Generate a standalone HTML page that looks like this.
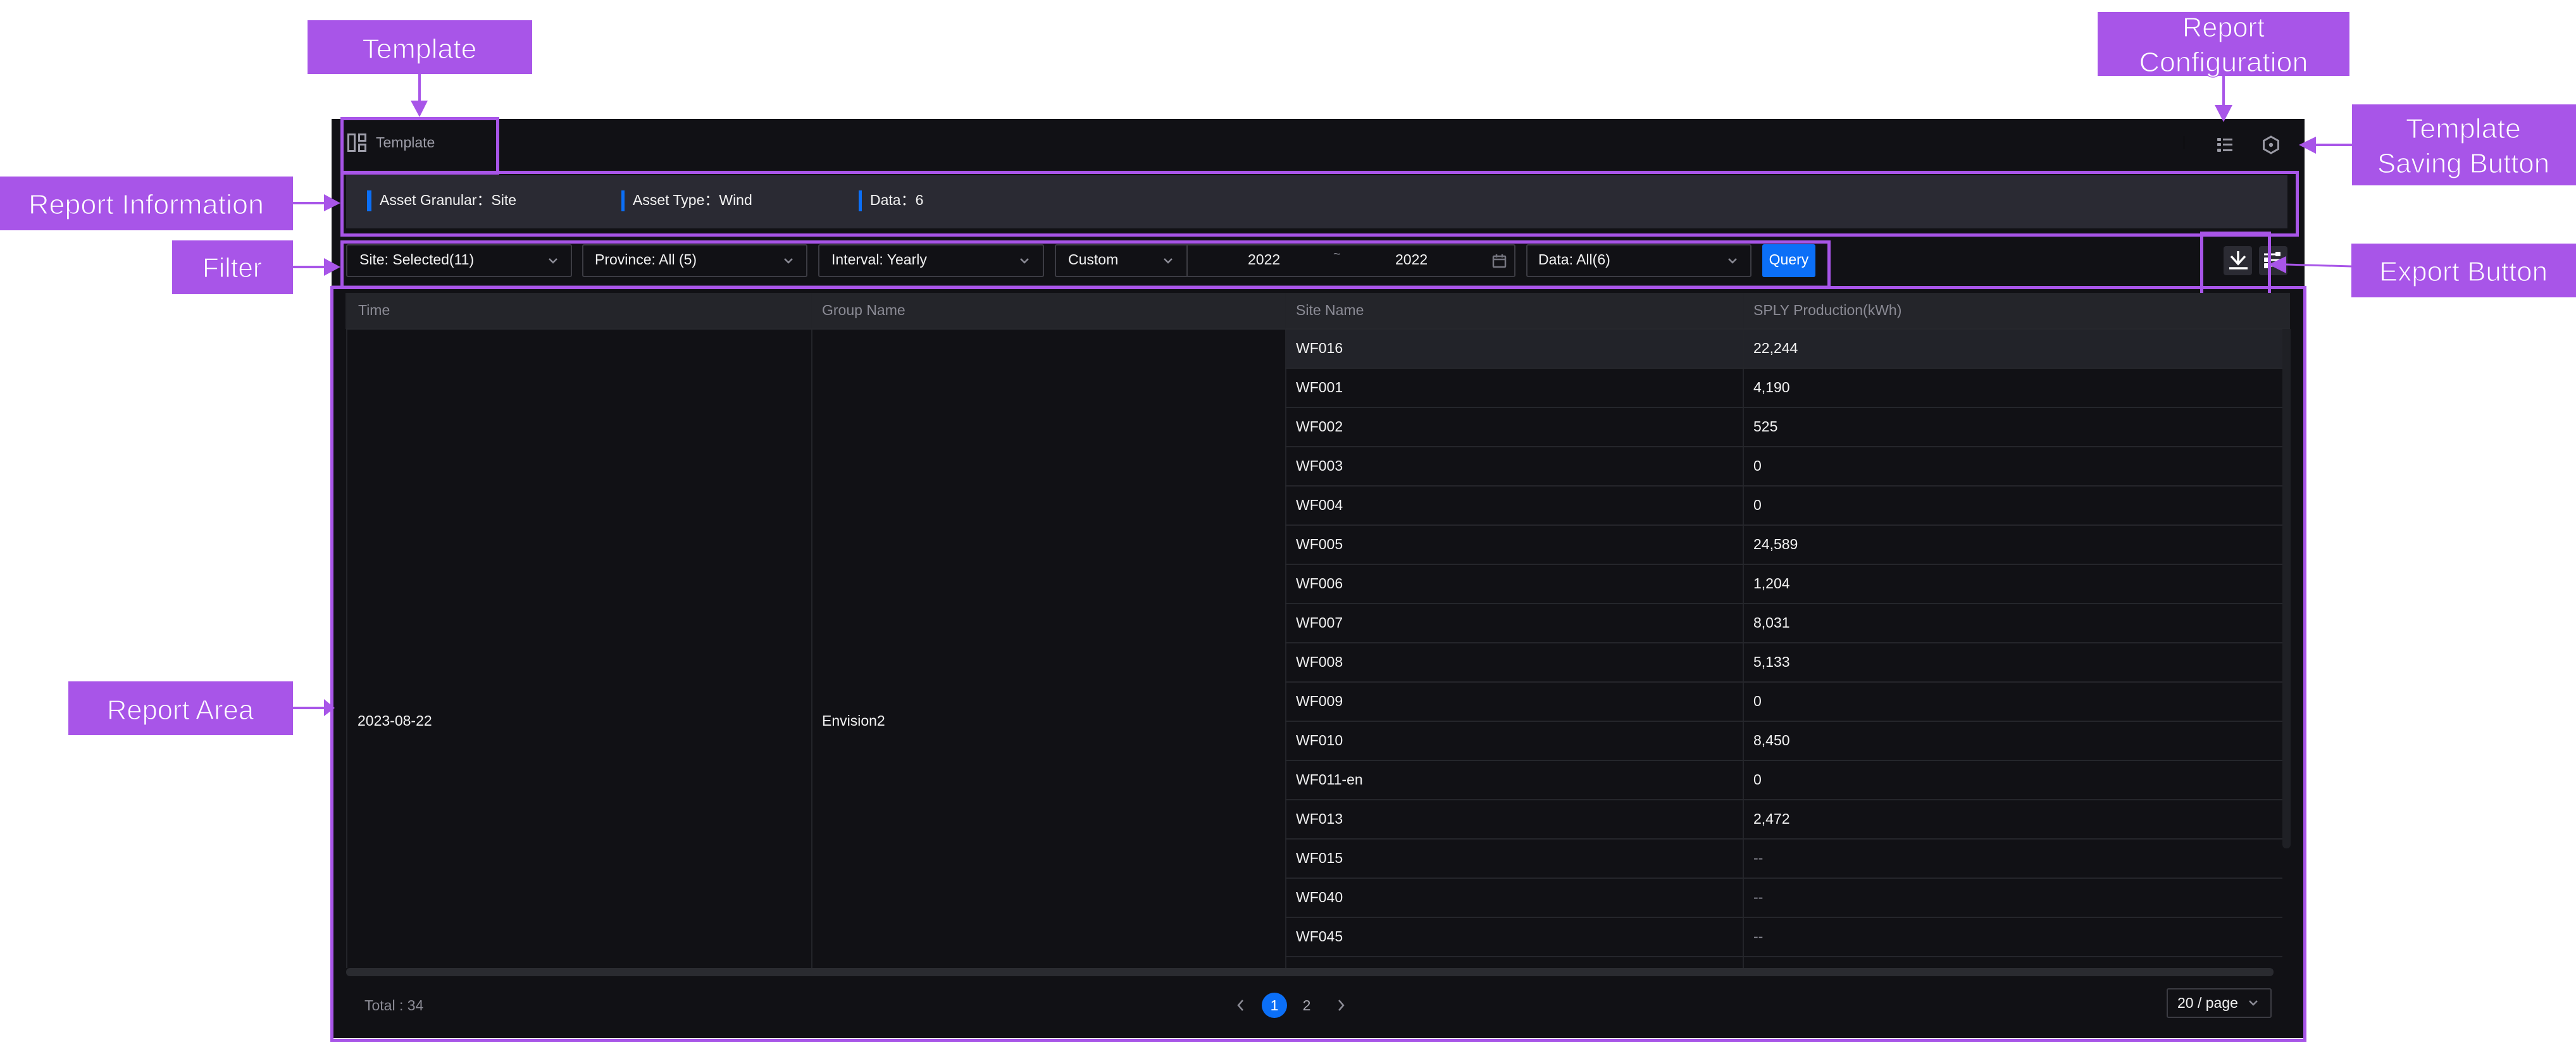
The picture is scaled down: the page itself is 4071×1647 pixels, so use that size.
<!DOCTYPE html>
<html lang="en"><head><meta charset="utf-8"><title>Template report</title>
<style>
html,body{margin:0;padding:0;background:#fff}
#p{position:relative;width:4071px;height:1647px;overflow:hidden;background:#fff;font-family:"Liberation Sans","Noto Sans CJK SC",sans-serif;font-size:23px;color:#f2f2f2}
#p div{position:absolute;box-sizing:border-box}
.t{white-space:nowrap;height:30px;line-height:30px}
.h{color:#8b8b95}
.s{border:2px solid #3c3c43;border-radius:3px;top:386px;height:52px;background:#111115}
.d{color:#8b8b95}
.v{width:2px;background:#232429}
.l{height:2px;left:2031px;width:1576px;background:#25262b}
svg{position:absolute;left:0;top:0}
</style></head><body><div id="p">
<div style="left:524px;top:188px;width:3118px;height:1453px;background:#111115"></div>

<div class="t" style="left:594px;top:210px;color:#9d9da8">Template</div>
<div style="left:3451px;top:215px;width:1px;height:21px;background:#050507"></div>

<div style="left:547px;top:277px;width:3068px;height:84px;background:#2a2a33"></div>
<div style="left:580px;top:301px;width:7px;height:33px;background:#0b6ff7"></div>
<div class="t" style="left:600px;top:301px">Asset Granular：Site</div>
<div style="left:982px;top:301px;width:5px;height:33px;background:#0b6ff7"></div>
<div class="t" style="left:1000px;top:301px">Asset Type：Wind</div>
<div style="left:1357px;top:301px;width:5px;height:33px;background:#0b6ff7"></div>
<div class="t" style="left:1375px;top:301px">Data：6</div>

<div class="s" style="left:547px;width:357px"></div><div class="t" style="left:568px;top:395px">Site: Selected(11)</div>
<div class="s" style="left:920px;width:356px"></div><div class="t" style="left:940px;top:395px">Province: All (5)</div>
<div class="s" style="left:1293px;width:357px"></div><div class="t" style="left:1314px;top:395px">Interval: Yearly</div>
<div class="s" style="left:1667px;width:728px"></div><div style="left:1875px;top:386px;width:2px;height:52px;background:#3c3c43"></div>
<div class="t" style="left:1688px;top:395px">Custom</div>
<div class="t" style="left:1972px;top:395px">2022</div>
<div class="t" style="left:2107px;top:387px;color:#8b8b95;font-size:20px">~</div>
<div class="t" style="left:2205px;top:395px">2022</div>
<div class="s" style="left:2412px;width:356px"></div><div class="t" style="left:2431px;top:395px">Data: All(6)</div>
<div style="left:2785px;top:386px;width:84px;height:52px;background:#0b6ff7;border-radius:3px"></div>
<div class="t" style="left:2785px;top:395px;width:84px;text-align:center;color:#fff">Query</div>

<div style="left:3514px;top:389px;width:45px;height:46px;background:#2b2b33;border-radius:4px"></div>
<div style="left:3570px;top:389px;width:45px;height:46px;background:#2b2b33;border-radius:4px"></div>

<div style="left:546px;top:463px;width:3073px;height:57px;background:#24252a"></div>
<div style="left:2031px;top:520px;width:1576px;height:62px;background:#222329"></div>
<div class="v" style="left:547px;top:463px;height:1067px"></div>
<div class="v" style="left:1282px;top:463px;height:1067px"></div>
<div class="v" style="left:2031px;top:463px;height:1067px"></div>
<div class="v" style="left:2754px;top:463px;height:1067px"></div>
<div style="left:547px;top:519px;width:3072px;height:2px;background:#26272c"></div>

<div class="l" style="top:581px"></div><div class="l" style="top:643px"></div><div class="l" style="top:705px"></div><div class="l" style="top:767px"></div><div class="l" style="top:829px"></div><div class="l" style="top:891px"></div><div class="l" style="top:953px"></div><div class="l" style="top:1015px"></div><div class="l" style="top:1077px"></div><div class="l" style="top:1139px"></div><div class="l" style="top:1201px"></div><div class="l" style="top:1263px"></div><div class="l" style="top:1325px"></div><div class="l" style="top:1387px"></div><div class="l" style="top:1449px"></div><div class="l" style="top:1511px"></div>

<div class="t h" style="left:566px;top:475px">Time</div>
<div class="t h" style="left:1299px;top:475px">Group Name</div>
<div class="t h" style="left:2048px;top:475px">Site Name</div>
<div class="t h" style="left:2771px;top:475px">SPLY Production(kWh)</div>

<div class="t" style="left:565px;top:1124px">2023-08-22</div>
<div class="t" style="left:1299px;top:1124px">Envision2</div>

<div class="t" style="left:2048px;top:535px">WF016</div><div class="t" style="left:2771px;top:535px">22,244</div>
<div class="t" style="left:2048px;top:597px">WF001</div><div class="t" style="left:2771px;top:597px">4,190</div>
<div class="t" style="left:2048px;top:659px">WF002</div><div class="t" style="left:2771px;top:659px">525</div>
<div class="t" style="left:2048px;top:721px">WF003</div><div class="t" style="left:2771px;top:721px">0</div>
<div class="t" style="left:2048px;top:783px">WF004</div><div class="t" style="left:2771px;top:783px">0</div>
<div class="t" style="left:2048px;top:845px">WF005</div><div class="t" style="left:2771px;top:845px">24,589</div>
<div class="t" style="left:2048px;top:907px">WF006</div><div class="t" style="left:2771px;top:907px">1,204</div>
<div class="t" style="left:2048px;top:969px">WF007</div><div class="t" style="left:2771px;top:969px">8,031</div>
<div class="t" style="left:2048px;top:1031px">WF008</div><div class="t" style="left:2771px;top:1031px">5,133</div>
<div class="t" style="left:2048px;top:1093px">WF009</div><div class="t" style="left:2771px;top:1093px">0</div>
<div class="t" style="left:2048px;top:1155px">WF010</div><div class="t" style="left:2771px;top:1155px">8,450</div>
<div class="t" style="left:2048px;top:1217px">WF011-en</div><div class="t" style="left:2771px;top:1217px">0</div>
<div class="t" style="left:2048px;top:1279px">WF013</div><div class="t" style="left:2771px;top:1279px">2,472</div>
<div class="t" style="left:2048px;top:1341px">WF015</div><div class="t d" style="left:2771px;top:1341px">--</div>
<div class="t" style="left:2048px;top:1403px">WF040</div><div class="t d" style="left:2771px;top:1403px">--</div>
<div class="t" style="left:2048px;top:1465px">WF045</div><div class="t d" style="left:2771px;top:1465px">--</div>

<div style="left:3607px;top:520px;width:13px;height:821px;background:#1f2025;border-radius:0 0 6px 6px"></div>
<div style="left:547px;top:1530px;width:3046px;height:13px;background:#2a2b30;border-radius:6px"></div>

<div class="t" style="left:576px;top:1574px;color:#8b8b95">Total : 34</div>
<div style="left:1994px;top:1569px;width:40px;height:40px;border-radius:50%;background:#0b6ff7"></div>
<div class="t" style="left:1994px;top:1574px;width:40px;text-align:center;color:#fff">1</div>
<div class="t" style="left:2045px;top:1574px;width:40px;text-align:center;color:#a9a9b2">2</div>
<div style="left:3424px;top:1562px;width:166px;height:47px;border:2px solid #3c3c43;border-radius:3px"></div>
<div class="t" style="left:3441px;top:1570px">20 / page</div>

<svg width="4071" height="1647" viewBox="0 0 4071 1647" fill="none">
 <!-- chevrons -->
 <g stroke="#8b8b95" stroke-width="2.5">
  <path d="M868 409l6 6 6-6M1240 409l6 6 6-6M1613 409l6 6 6-6M1840 409l6 6 6-6M2732 409l6 6 6-6M3555 1582l6 6 6-6"/>
  <path d="M1964 1581l-7 8 7 8M2116 1581l7 8-7 8"/>
 </g>
 <!-- calendar -->
 <g stroke="#75757f" stroke-width="2.5">
  <rect x="2360" y="405" width="19" height="17" rx="1"/><path d="M2360 410h19M2365 402v5M2374 402v5"/>
 </g>
 <!-- template icon -->
 <g stroke="#a0a0ac" stroke-width="3">
  <rect x="550.500" y="212.500" width="10" height="26"/>
  <rect x="567.500" y="212.500" width="10" height="10"/>
  <rect x="567.500" y="228.500" width="10" height="10"/>
 </g>
 <!-- list icon -->
 <g fill="#9a9aa4">
  <rect x="3504" y="218" width="6" height="5" rx="1"/><rect x="3504" y="226" width="6" height="5" rx="1"/><rect x="3504" y="235" width="6" height="5" rx="1"/>
  <rect x="3513" y="219" width="15" height="3"/><rect x="3513" y="227" width="15" height="3"/><rect x="3513" y="236" width="15" height="3"/>
 </g>
 <!-- hex icon -->
 <path d="M3589 216l11.500 6.500v13l-11.500 6.500-11.500-6.500v-13z" stroke="#9a9aa4" stroke-width="3"/>
 <circle cx="3589" cy="229" r="3.200" fill="#9a9aa4"/>
 <!-- download -->
 <path d="M3537 397v21M3526 405l11 12 11-12" stroke="#fff" stroke-width="3.500"/>
 <path d="M3523 424h29" stroke="#fff" stroke-width="3.500"/>
 <!-- sliders -->
 <g stroke="#fff" stroke-width="3"><path d="M3578 402h26M3578 411h26M3578 420h26"/></g>
 <g fill="#fff"><rect x="3596" y="398" width="8" height="7" rx="1"/><rect x="3578" y="407" width="8" height="7" rx="1"/><rect x="3578" y="416" width="8" height="8" rx="1"/></g>

 <!-- annotation boxes -->
 <g stroke="#a855e8" stroke-width="5">
  <rect x="540.500" y="187.500" width="246" height="86"/>
  <rect x="540.500" y="272.500" width="3090" height="99"/>
  <path d="M540.500 457V382.500H2890.500V453"/>
  <path d="M2890.500 380V454H525"/>
  <path d="M524.500 1647V454.500H3642.500V1647"/>
  <path d="M522 1644.500H3645"/>
  <path d="M3479.500 463V368.500H3586.500V463"/>
 </g>
 <!-- labels -->
 <g fill="#a855e8">
  <rect x="486" y="32" width="355" height="85"/>
  <rect x="0" y="279" width="463" height="85"/>
  <rect x="272" y="380" width="191" height="85"/>
  <rect x="108" y="1077" width="355" height="85"/>
  <rect x="3315" y="19" width="398" height="101"/>
  <rect x="3717" y="165" width="354" height="128"/>
  <rect x="3716" y="385" width="355" height="85"/>
  <path d="M649 159h27l-13 26zM512 307l26 14-26 13zM512 408l26 14-26 14zM512 1105l17 14-17 13zM3500 166h28l-14 27zM3633 229l27-13v27zM3585 418l28-13v27z"/>
 </g>
 <g stroke="#a855e8" stroke-width="4">
  <path d="M663 117v44M463 321h50M463 422h50M463 1119h50M3514 120v48M3658 229h59"/>
  <path d="M3612 418l104 3" stroke-width="3"/>
 </g>
 <g fill="#fff" stroke="#a855e8" stroke-width="1.200" font-family="'Liberation Sans',sans-serif" font-size="44" text-anchor="middle">
  <text x="663" y="92" textLength="181" lengthAdjust="spacingAndGlyphs">Template</text>
  <text x="231" y="338" textLength="372" lengthAdjust="spacingAndGlyphs">Report Information</text>
  <text x="367" y="438" textLength="94" lengthAdjust="spacingAndGlyphs">Filter</text>
  <text x="285" y="1137" textLength="232" lengthAdjust="spacingAndGlyphs">Report Area</text>
  <text x="3514" y="58" textLength="130" lengthAdjust="spacingAndGlyphs">Report</text>
  <text x="3514" y="113" textLength="267" lengthAdjust="spacingAndGlyphs">Configuration</text>
  <text x="3893" y="218" textLength="182" lengthAdjust="spacingAndGlyphs">Template</text>
  <text x="3893" y="273" textLength="272" lengthAdjust="spacingAndGlyphs">Saving Button</text>
  <text x="3893" y="444" textLength="266" lengthAdjust="spacingAndGlyphs">Export Button</text>
 </g>
</svg>
</div></body></html>
